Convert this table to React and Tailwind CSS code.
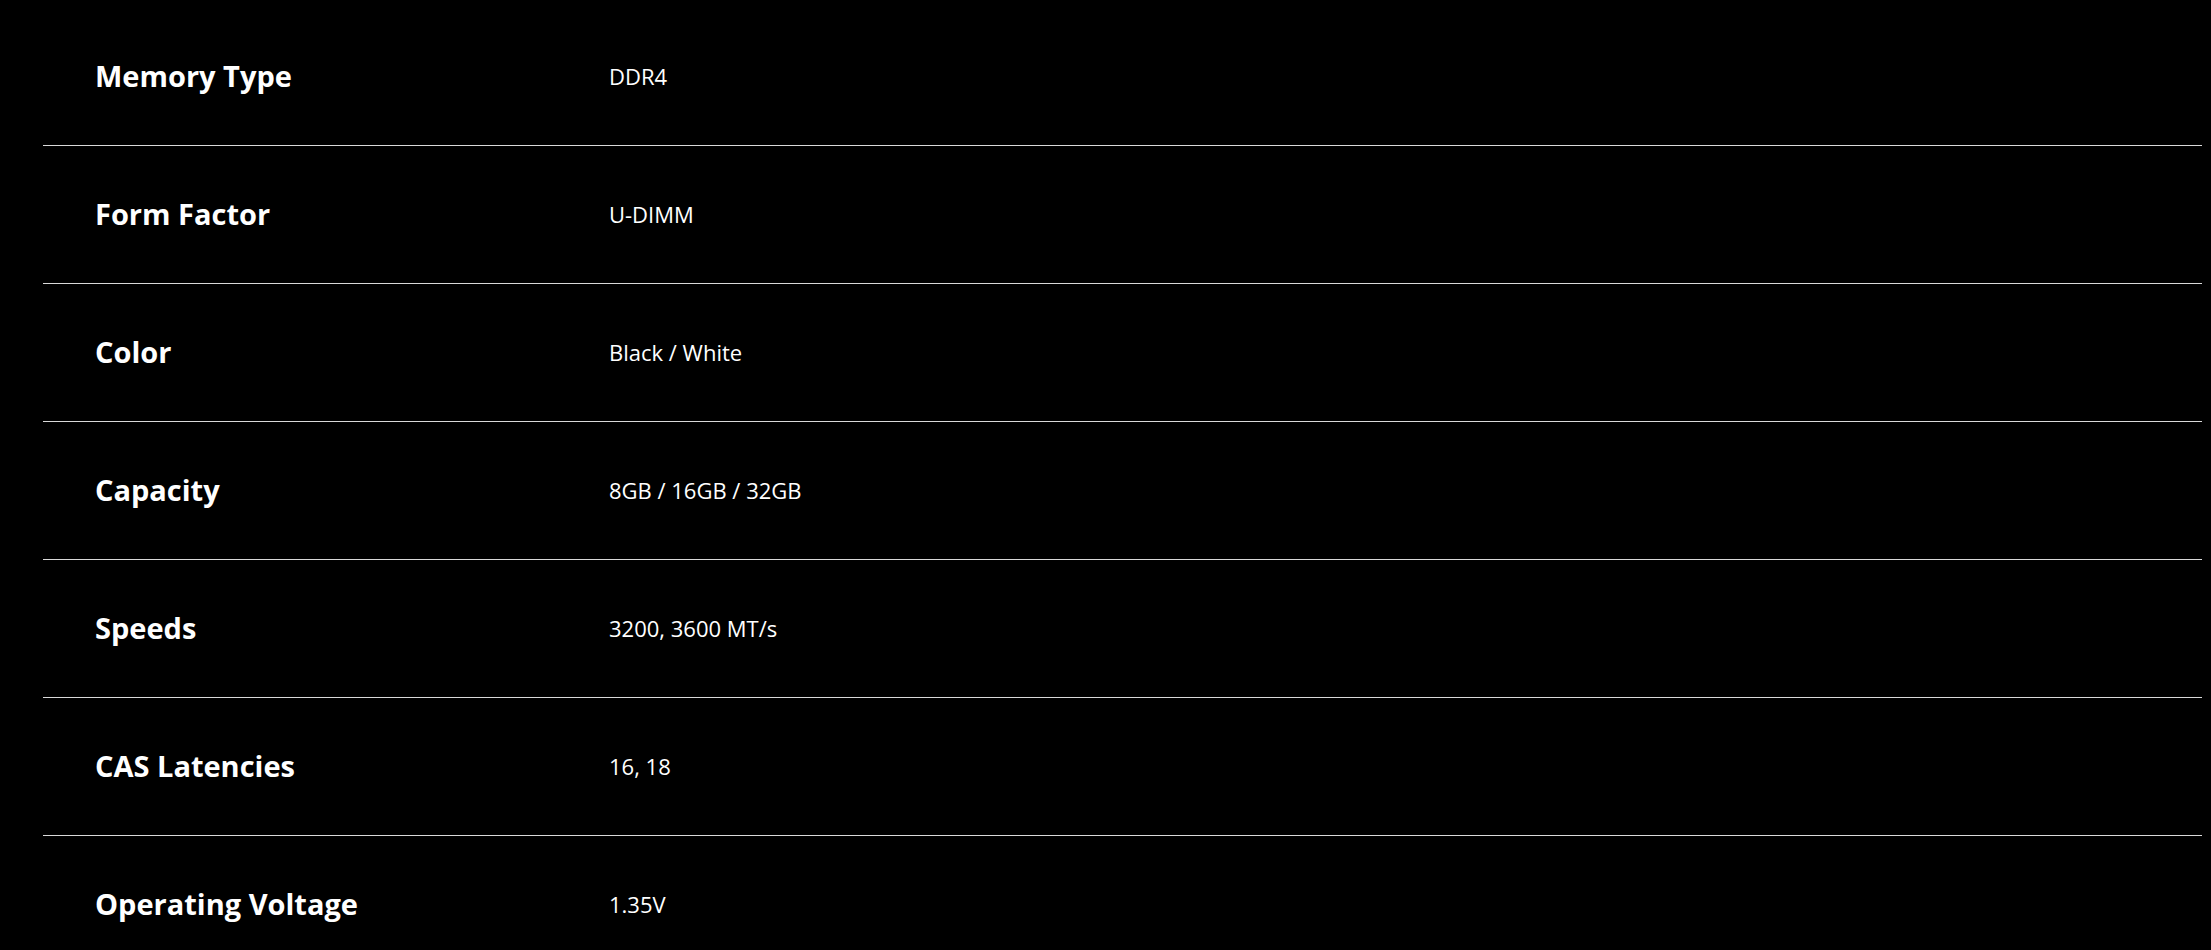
const specs = [
  { label: "Memory Type", value: "DDR4" },
  { label: "Form Factor", value: "U-DIMM" },
  { label: "Color", value: "Black / White" },
  { label: "Capacity", value: "8GB / 16GB / 32GB" },
  { label: "Speeds", value: "3200, 3600 MT/s" },
  { label: "CAS Latencies", value: "16, 18" },
  { label: "Operating Voltage", value: "1.35V" },
];

export default function App() {
  return (
    <div className="min-h-screen bg-black pt-[8px] font-['Open_Sans',sans-serif] text-white">
      <div className="ml-[43px] mr-[9px]">
        {specs.map((spec, index) => (
          <div
            key={spec.label}
            className={
              index === specs.length - 1
                ? "flex h-[137px] items-center pl-[52px]"
                : "flex h-[138px] items-center border-b border-[#d9d9d9] pl-[52px]"
            }
          >
            <div className="-mt-[2px] w-[514px] text-[29px] font-bold">{spec.label}</div>
            <div className="text-[22px]">{spec.value}</div>
          </div>
        ))}
      </div>
    </div>
  );
}
